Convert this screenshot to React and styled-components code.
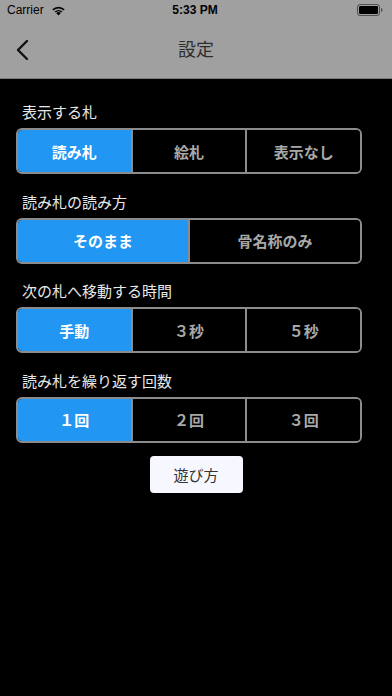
import React, { useState } from "react";
import styled, { createGlobalStyle, css } from "styled-components";

const GlobalStyle = createGlobalStyle`
  html, body {
    margin: 0;
    padding: 0;
    background: #000;
  }
  body {
    font-family: "Noto Sans CJK JP", "Noto Sans", sans-serif;
  }
`;

const settings = [
  { label: "表示する札", options: ["読み札", "絵札", "表示なし"] },
  { label: "読み札の読み方", options: ["そのまま", "骨名称のみ"] },
  { label: "次の札へ移動する時間", options: ["手動", "３秒", "５秒"] },
  { label: "読み札を繰り返す回数", options: ["１回", "２回", "３回"] },
];

const App = () => {
  const [selected, setSelected] = useState([0, 0, 0, 0]);

  const onSelect = (row, idx) => {
    setSelected(selected.map((v, i) => (i === row ? idx : v)));
  };

  return (
    <Screen>
      <GlobalStyle />
      <Header>
        <StatusBar>
          <Carrier>
            Carrier
            <svg width="15" height="11" viewBox="0 0 15 11">
              <path d="M7.5 10.5 L5.2 8.1 A3.3 3.3 0 0 1 9.8 8.1 Z" fill="#000" />
              <path d="M3.6 6.5 A5.6 5.6 0 0 1 11.4 6.5 L10.3 7.6 A4.1 4.1 0 0 0 4.7 7.6 Z" fill="#000" />
              <path d="M1.3 4.2 A8.9 8.9 0 0 1 13.7 4.2 L12.5 5.4 A7.2 7.2 0 0 0 2.5 5.4 Z" fill="#000" />
            </svg>
          </Carrier>
          <Time>5:33 PM</Time>
          <Battery>
            <svg width="26" height="12" viewBox="0 0 26 12">
              <rect x="0.5" y="0.5" width="22" height="11" rx="2.5" fill="none" stroke="#000" strokeOpacity="0.5" />
              <rect x="2" y="2" width="19" height="8" rx="1.2" fill="#000" />
              <path d="M24 4 Q25.5 4 25.5 6 Q25.5 8 24 8 Z" fill="#000" fillOpacity="0.5" />
            </svg>
          </Battery>
        </StatusBar>
        <NavBar>
          <BackButton>
            <svg width="13" height="22" viewBox="0 0 13 22">
              <path d="M11 2 L2 11 L11 20" fill="none" stroke="#111" strokeWidth="2.4" strokeLinecap="round" strokeLinejoin="round" />
            </svg>
          </BackButton>
          <Title>設定</Title>
        </NavBar>
      </Header>

      <Content>
        {settings.map((s, row) => (
          <Section key={s.label}>
            <Label>{s.label}</Label>
            <Segmented>
              {s.options.map((opt, idx) => (
                <Segment
                  key={opt}
                  $active={selected[row] === idx}
                  onClick={() => onSelect(row, idx)}
                >
                  {opt}
                </Segment>
              ))}
            </Segmented>
          </Section>
        ))}
        <HelpButton>遊び方</HelpButton>
      </Content>
    </Screen>
  );
};

export default App;

const Screen = styled.div`
  width: 392px;
  min-height: 696px;
  background: #000;
`;

const Header = styled.div`
  background: #a0a0a0;
  border-bottom: 1px solid #7c7c7c;
`;

const StatusBar = styled.div`
  height: 20px;
  display: grid;
  grid-template-columns: 1fr auto 1fr;
  align-items: center;
  padding: 0 9px 0 7px;
  font-family: "Liberation Sans", Arial, sans-serif;
  font-size: 12px;
  color: #000;
`;

const Carrier = styled.div`
  display: flex;
  align-items: center;
  gap: 7px;
`;

const Time = styled.div`
  font-weight: bold;
`;

const Battery = styled.div`
  display: flex;
  justify-content: flex-end;
`;

const NavBar = styled.div`
  height: 58px;
  display: flex;
  align-items: center;
  justify-content: center;
  position: relative;
`;

const BackButton = styled.div`
  position: absolute;
  left: 16px;
  top: 19px;
  display: flex;
`;

const Title = styled.div`
  font-size: 18px;
  color: #2e2e2e;
  margin-top: -2px;
`;

const Content = styled.div`
  padding: 23px 16px 0 16px;
  display: flex;
  flex-direction: column;
  gap: 17.5px;
`;

const Section = styled.div`
  display: flex;
  flex-direction: column;
`;

const Label = styled.div`
  height: 20px;
  line-height: 20px;
  font-size: 15px;
  color: #e8e8e8;
  padding-left: 6px;
  margin-bottom: 6px;
`;

const Segmented = styled.div`
  display: flex;
  width: 346px;
  height: 46px;
  box-sizing: border-box;
  border: 2px solid #8c8c8c;
  border-radius: 6px;
  overflow: hidden;
`;

const Segment = styled.div`
  flex: 1;
  display: flex;
  align-items: center;
  justify-content: center;
  font-size: 15px;
  font-weight: bold;
  color: #a8a8a8;
  background: #000;
  cursor: pointer;
  & + & {
    border-left: 2px solid #8c8c8c;
  }
  ${({ $active }) =>
    $active &&
    css`
      background: #2196f3;
      color: #fff;
    `}
`;

const HelpButton = styled.button`
  align-self: center;
  margin-top: -4px;
  width: 93px;
  height: 37px;
  border: none;
  border-radius: 4px;
  background: #f7f8ff;
  color: #333;
  font-family: "Noto Sans CJK JP", sans-serif;
  font-size: 15px;
  cursor: pointer;
`;
